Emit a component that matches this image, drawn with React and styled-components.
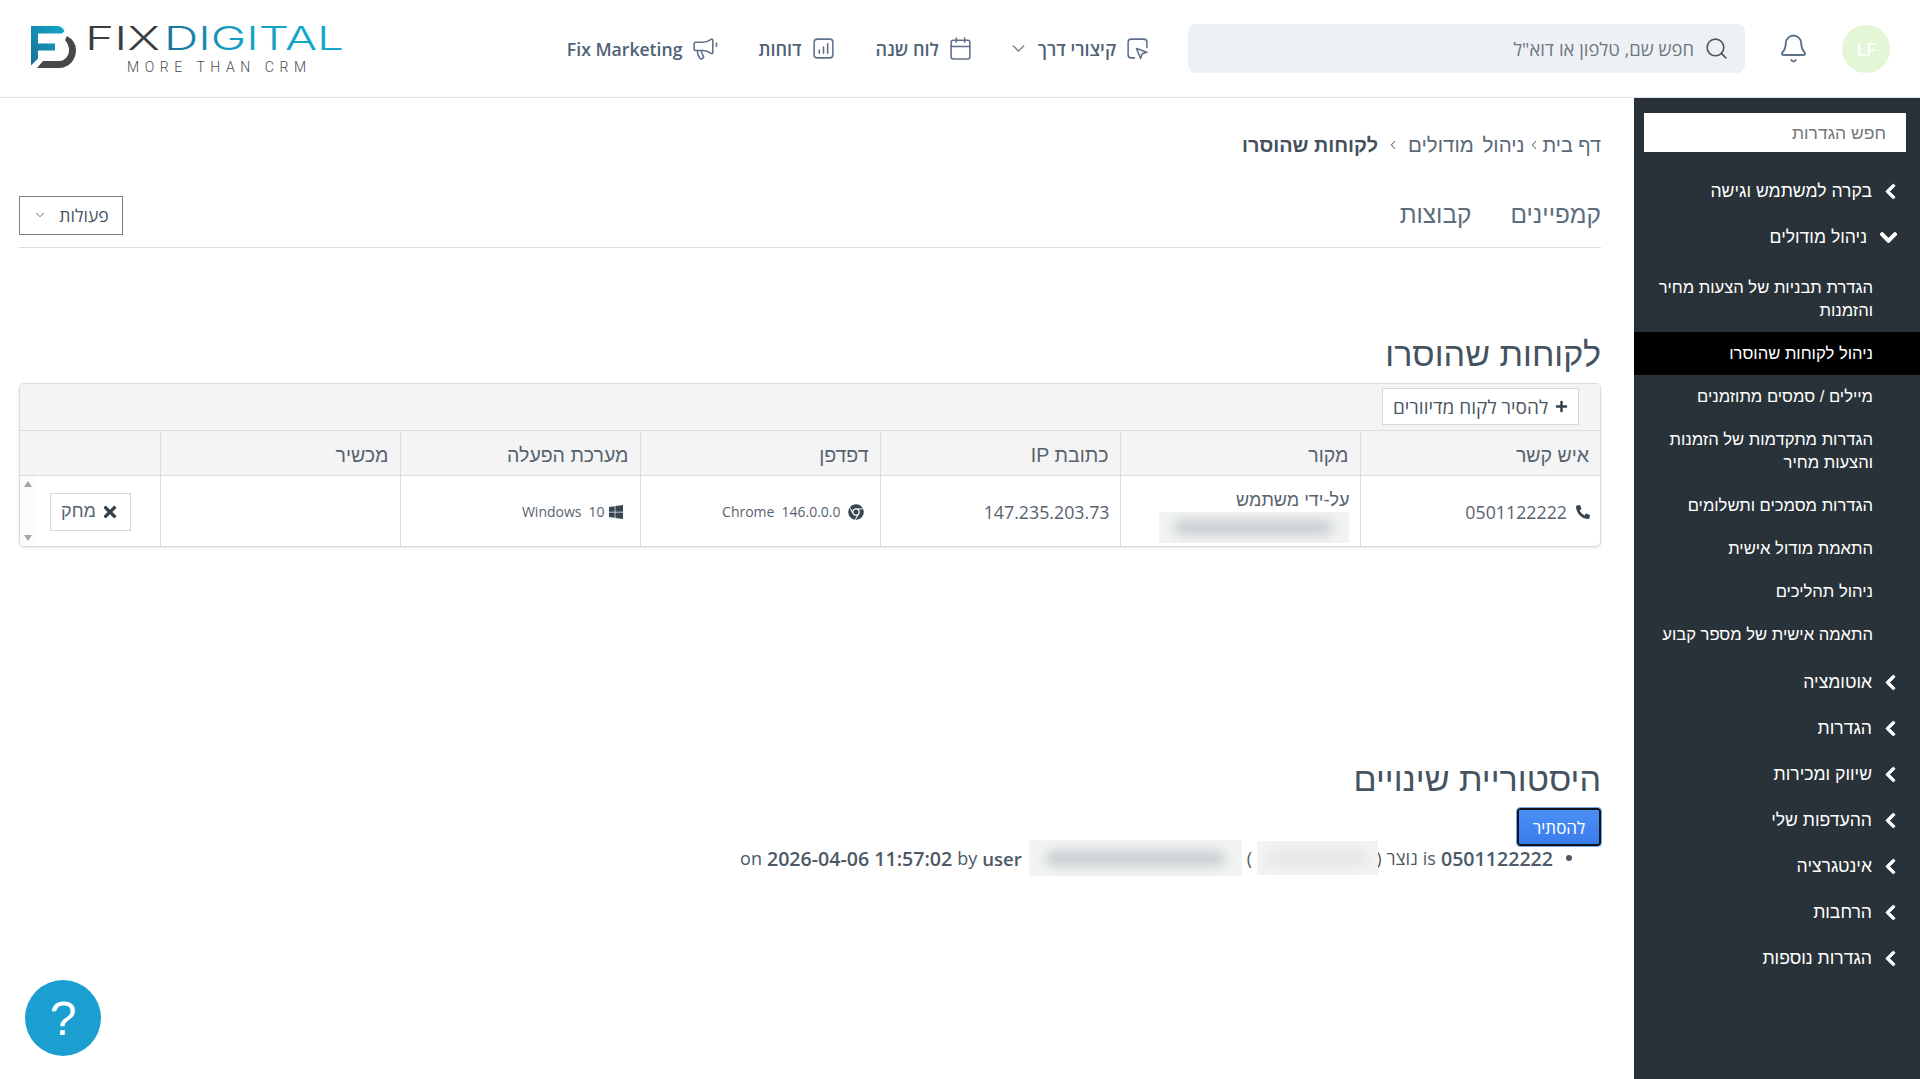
import React from "react";
import styled, { createGlobalStyle } from "styled-components";
import { Bell, Search, Calendar, ChevronDown, ChevronLeft } from "lucide-react";
import {
  FaChevronLeft,
  FaChevronDown,
  FaPhoneAlt,
  FaWindows,
  FaChrome,
  FaPlus,
  FaTimes,
} from "react-icons/fa";

const subItems = [
  { label: "הגדרת תבניות של הצעות מחיר והזמנות" },
  { label: "ניהול לקוחות שהוסרו", active: true },
  { label: "מיילים / סמסים מתוזמנים" },
  { label: "הגדרות מתקדמות של הזמנות והצעות מחיר" },
  { label: "הגדרות מסמכים ותשלומים" },
  { label: "התאמת מודול אישית" },
  { label: "ניהול תהליכים" },
  { label: "התאמה אישית של מספר קבוע" },
];

const bottomGroups = [
  "אוטומציה",
  "הגדרות",
  "שיווק ומכירות",
  "ההעדפות שלי",
  "אינטגרציה",
  "הרחבות",
  "הגדרות נוספות",
];

const Logo = () => (
  <LogoBox dir="ltr">
    <svg width="320" height="60" viewBox="0 0 320 60">
      <defs>
        <linearGradient id="fBlue" x1="0" y1="1" x2="1" y2="0">
          <stop offset="0" stopColor="#1a6f96" />
          <stop offset="1" stopColor="#12a8cc" />
        </linearGradient>
        <linearGradient id="wordBlue" x1="0" y1="0" x2="1" y2="0">
          <stop offset="0" stopColor="#1a7097" />
          <stop offset="0.4" stopColor="#12a0c4" />
          <stop offset="1" stopColor="#14a9cb" />
        </linearGradient>
      </defs>
      <g transform="translate(0 5)">
        <path
          d="M1 2H27Q32 2 34.5 7L32 9.5H8V19.5H25V26.5H8V34.5L1 41.5Z"
          fill="url(#fBlue)"
        />
        <path
          d="M37 12Q46 17 46 26C46 36 39 44 29 44H7L13 37H29C35 37 39 32 39 26Q39 21 35 16Z"
          fill="#46484a"
        />
      </g>
      <text x="55" y="31" fontFamily="Inter" fontWeight="300" fontSize="33" fill="#3b3d40" textLength="75" lengthAdjust="spacingAndGlyphs">
        FIX
      </text>
      <text x="134" y="31" fontFamily="Inter" fontWeight="300" fontSize="33" fill="url(#wordBlue)" textLength="180" lengthAdjust="spacingAndGlyphs">
        DIGITAL
      </text>
      <text x="97" y="53" fontFamily="Roboto" fontWeight="300" fontSize="14" fill="#4a4c4f" textLength="179" lengthAdjust="spacing">
        MORE THAN CRM
      </text>
    </svg>
  </LogoBox>
);

const ReportIcon = () => (
  <svg width="25" height="25" viewBox="0 0 24 24" fill="none" stroke="currentColor" strokeWidth="1.5" strokeLinecap="round">
    <rect x="3" y="3" width="18" height="18" rx="3" />
    <path d="M8 16.5v-3M12 16.5v-6M16 16.5v-9" />
  </svg>
);

const ShortcutIcon = () => (
  <svg width="25" height="25" viewBox="0 0 24 24" fill="none" stroke="currentColor" strokeWidth="1.5" strokeLinecap="round" strokeLinejoin="round">
    <path d="M9 21H6a3 3 0 0 1-3-3V6a3 3 0 0 1 3-3h12a3 3 0 0 1 3 3v5" />
    <path d="M11 12l10 3.5-4.5 1.5-1.5 4.5z" />
  </svg>
);

const MegaphoneIcon = () => (
  <svg width="27" height="25" viewBox="0 0 26 24" fill="none" stroke="currentColor" strokeWidth="1.5" strokeLinecap="round" strokeLinejoin="round">
    <path d="M11 6a13 13 0 0 0 8.4-2.8A1 1 0 0 1 21 4v12a1 1 0 0 1-1.6.8A13 13 0 0 0 11 14H5a2 2 0 0 1-2-2V8a2 2 0 0 1 2-2z" />
    <path d="M6 14a12 12 0 0 0 2.4 7.2 2 2 0 0 0 3.2-2.4A8 8 0 0 1 10 14" />
    <path d="M24.5 7v3" />
  </svg>
);

const App = () => (
  <Page dir="rtl">
    <GlobalStyle />
    <Header>
      <Avatar>LF</Avatar>
      <BellButton>
        <Bell size={31} strokeWidth={1.5} />
      </BellButton>
      <SearchBox>
        <Search size={25} strokeWidth={1.5} />
        <span>חפש שם, טלפון או דוא"ל</span>
      </SearchBox>
      <Nav>
        <NavItem>
          <ShortcutIcon />
          קיצורי דרך
          <NavCaret>
            <ChevronDown size={21} strokeWidth={1.5} />
          </NavCaret>
        </NavItem>
        <NavItem>
          <Calendar size={25} strokeWidth={1.5} />
          לוח שנה
        </NavItem>
        <NavItem>
          <ReportIcon />
          דוחות
        </NavItem>
        <NavItem>
          <MegaphoneIcon />
          <LatinLabel dir="ltr">Fix Marketing</LatinLabel>
        </NavItem>
      </Nav>
      <Logo />
    </Header>

    <Body>
      <Sidebar>
        <SideSearch>חפש הגדרות</SideSearch>
        <Group>
          <FaChevronLeft />
          בקרה למשתמש וגישה
        </Group>
        <Group $open>
          <FaChevronDown />
          ניהול מודולים
        </Group>
        <SubList>
          {subItems.map((item) => (
            <SubItem key={item.label} $active={item.active}>
              {item.label}
            </SubItem>
          ))}
        </SubList>
        <BottomGroups>
          {bottomGroups.map((label) => (
            <Group key={label}>
              <FaChevronLeft />
              {label}
            </Group>
          ))}
        </BottomGroups>
      </Sidebar>

      <Main>
        <Breadcrumb>
          <span>דף בית</span>
          <ChevronLeft size={14} strokeWidth={1.75} />
          <CrumbWide>ניהול מודולים</CrumbWide>
          <Spaced>
            <ChevronLeft size={14} strokeWidth={1.75} />
          </Spaced>
          <strong>לקוחות שהוסרו</strong>
        </Breadcrumb>

        <TabsRow>
          <Tabs>
            <Tab>קמפיינים</Tab>
            <Tab>קבוצות</Tab>
          </Tabs>
          <ActionsButton>
            פעולות
            <ChevronDown size={14} strokeWidth={1.5} />
          </ActionsButton>
        </TabsRow>

        <Heading>לקוחות שהוסרו</Heading>
        <TableCard>
          <Toolbar>
            <AddButton>
              <FaPlus />
              להסיר לקוח מדיוורים
            </AddButton>
          </Toolbar>
          <Table>
            <colgroup>
              <col width="240" />
              <col width="240" />
              <col width="240" />
              <col width="240" />
              <col width="240" />
              <col width="240" />
              <col />
            </colgroup>
            <thead>
              <tr>
                <th>איש קשר</th>
                <th>מקור</th>
                <th>כתובת IP</th>
                <th>דפדפן</th>
                <th>מערכת הפעלה</th>
                <th>מכשיר</th>
                <th />
              </tr>
            </thead>
            <tbody>
              <tr>
                <td>
                  <CellRow>
                    <PhoneIcon />
                    <span>0501122222</span>
                  </CellRow>
                </td>
                <SourceCell>
                  <SourceLabel>על-ידי משתמש</SourceLabel>
                  <BlurBox $w={190} $h={31}>
                    <BlurBar />
                  </BlurBox>
                </SourceCell>
                <td>147.235.203.73</td>
                <td>
                  <SmallRow $iconGap={7}>
                    <FaChrome />
                    <span>146.0.0.0</span>
                    <span>Chrome</span>
                  </SmallRow>
                </td>
                <td>
                  <SmallRow $iconGap={3}>
                    <FaWindows />
                    <span>10</span>
                    <span>Windows</span>
                  </SmallRow>
                </td>
                <td />
                <LastCell>
                  <DeleteButton>
                    <FaTimes />
                    מחק
                  </DeleteButton>
                  <Scroller>
                    <ArrowUp />
                    <ArrowDown />
                  </Scroller>
                </LastCell>
              </tr>
            </tbody>
          </Table>
        </TableCard>

        <HistoryHeading>היסטוריית שינויים</HistoryHeading>
        <HideButton>להסתיר</HideButton>
        <HistoryLine>
          <Bullet />
          <b>0501122222</b>
          <span>is</span>
          <span>נוצר</span>
          <span>(</span>
          <NameBlur $w={121} $h={34}>
            <BlurBar $light />
          </NameBlur>
          <span>)</span>
          <BlurBox $w={213} $h={36}>
            <BlurBar />
          </BlurBox>
          <UserLabel>user</UserLabel>
          <span>by</span>
          <b dir="ltr">2026-04-06 11:57:02</b>
          <span>on</span>
        </HistoryLine>
      </Main>
    </Body>

    <HelpBubble>?</HelpBubble>
  </Page>
);

export default App;

const GlobalStyle = createGlobalStyle`
  html, body {
    margin: 0;
    padding: 0;
    height: 100%;
    overflow: hidden;
    background: #fff;
  }
  * {
    box-sizing: border-box;
  }
`;

const Page = styled.div`
  height: 1079px;
  display: flex;
  flex-direction: column;
  font-family: "Open Sans", "Noto Sans", "Liberation Sans", sans-serif;
  color: #4a5764;
  background: #fff;
`;

const Header = styled.header`
  height: 98px;
  flex: none;
  display: flex;
  align-items: center;
  padding: 0 30px 0 0;
  border-bottom: 1px solid #dde2e8;
  background: #fff;
`;

const Avatar = styled.div`
  width: 48px;
  height: 48px;
  flex: none;
  border-radius: 50%;
  background: #e3f6d5;
  color: #fff;
  font-size: 18px;
  font-weight: 600;
  display: flex;
  align-items: center;
  justify-content: center;
`;

const BellButton = styled.div`
  margin-right: 33px;
  display: flex;
  color: #5d7289;
`;

const SearchBox = styled.div`
  width: 557px;
  height: 49px;
  flex: none;
  margin-right: 33px;
  padding: 0 16px;
  border-radius: 8px;
  background: #edf1f5;
  display: flex;
  align-items: center;
  gap: 10px;
  font-size: 18.4px;
  color: #6f7780;

  svg {
    color: #4f5660;
  }
`;

const Nav = styled.nav`
  display: flex;
  align-items: center;
  gap: 40px;
  margin-right: 38px;
`;

const NavItem = styled.div`
  display: flex;
  align-items: center;
  gap: 9px;
  font-size: 18px;
  font-weight: 600;
  color: #4f6277;
  white-space: nowrap;

  svg {
    color: #5d7289;
    flex: none;
  }
`;

const NavCaret = styled.span`
  display: flex;
  margin-left: -5px;
`;

const LatinLabel = styled.span`
  font-size: 17.6px;
`;

const LogoBox = styled.div`
  margin-right: auto;
  margin-left: 30px;
  height: 60px;
  display: flex;
`;

const Body = styled.div`
  flex: 1;
  display: flex;
  min-height: 0;
`;

const Sidebar = styled.aside`
  width: 286px;
  flex: none;
  padding-top: 15px;
  background: #293239;
  color: #fff;
`;

const SideSearch = styled.div`
  height: 39px;
  margin: 0 14px 17px 10px;
  padding: 2px 20px 0;
  display: flex;
  align-items: center;
  background: #fff;
  font-size: 17.5px;
  font-family: "Liberation Sans", sans-serif;
  color: #777;
`;

const Group = styled.div`
  height: 45.9px;
  display: flex;
  align-items: center;
  gap: ${(p) => (p.$open ? "12px" : "10px")};
  padding-right: ${(p) => (p.$open ? "22px" : "21px")};
  font-size: 17.6px;
  font-family: "Liberation Sans", sans-serif;

  svg {
    flex: none;
    font-size: ${(p) => (p.$open ? "19px" : "17px")};
    stroke: currentColor;
    stroke-width: 30px;
  }
`;

const SubList = styled.div`
  margin-top: 5px;
`;

const SubItem = styled.div`
  padding: 10px 47px 10px 20px;
  line-height: 23px;
  font-size: 16.6px;
  font-family: "Liberation Sans", sans-serif;
  background: ${(p) => (p.$active ? "#000" : "transparent")};
`;

const BottomGroups = styled.div`
  margin-top: 4px;
`;

const Main = styled.main`
  flex: 1;
  min-width: 0;
  padding: 35px 33px 0 19px;
`;

const Breadcrumb = styled.div`
  height: 24px;
  display: flex;
  align-items: center;
  gap: 2px;
  font-size: 19.8px;
  font-family: "Liberation Sans", sans-serif;
  color: #5a6977;

  strong {
    color: #43505c;
  }
`;

const CrumbWide = styled.span`
  font-size: 20.5px;
  word-spacing: 3px;
`;

const Spaced = styled.span`
  display: flex;
  margin: 0 6px;
`;

const TabsRow = styled.div`
  height: 52px;
  margin-top: 39px;
  display: flex;
  justify-content: space-between;
  align-items: flex-start;
  border-bottom: 1px solid #dcdcdc;
`;

const Tabs = styled.div`
  display: flex;
  gap: 39px;
`;

const Tab = styled.div`
  line-height: 38px;
  font-size: 24.4px;
  font-family: "Liberation Sans", sans-serif;
  color: #5d6d7c;
`;

const ActionsButton = styled.div`
  width: 104px;
  height: 39px;
  padding-bottom: 2px;
  display: flex;
  align-items: center;
  justify-content: center;
  gap: 12px;
  border: 1px solid #777f85;
  font-size: 17.6px;
  color: #4a5764;
`;

const Heading = styled.h2`
  margin: 86px 0 9px;
  height: 40px;
  line-height: 40px;
  font-size: 34.1px;
  font-weight: 400;
  font-family: "Liberation Sans", sans-serif;
  color: #45535f;
`;

const HistoryHeading = styled(Heading)`
  margin-top: 212px;
`;

const TableCard = styled.div`
  border: 1px solid #dcdcdc;
  border-radius: 5px;
  box-shadow: 0 1px 3px rgba(0, 0, 0, 0.1);
  overflow: hidden;
`;

const Toolbar = styled.div`
  height: 47px;
  padding: 4px 21px 0 0;
  background: #f4f4f4;
  border-bottom: 1px solid #dcdcdc;
`;

const AddButton = styled.div`
  width: 197px;
  height: 37px;
  display: inline-flex;
  align-items: center;
  justify-content: center;
  gap: 7px;
  background: #fff;
  border: 1px solid #d8d8d8;
  font-size: 19px;
  color: #4a5764;
  white-space: nowrap;

  svg {
    font-size: 13px;
    color: #33404c;
  }
`;

const Table = styled.table`
  width: 100%;
  table-layout: fixed;
  border-collapse: collapse;
  font-size: 17.8px;

  th {
    height: 44px;
    padding: 5px 11px 0;
    background: #f4f4f4;
    border-bottom: 1px solid #dcdcdc;
    border-left: 1px solid #dcdcdc;
    font-weight: 400;
    text-align: right;
    font-size: 19.5px;
    font-family: "Liberation Sans", sans-serif;
    color: #56636f;
  }

  td {
    height: 71px;
    padding: 2px 10px 0;
    border-left: 1px solid #dcdcdc;
    text-align: right;
    color: #56636f;
  }

  th:last-child,
  td:last-child {
    border-left: none;
  }
`;

const CellRow = styled.div`
  display: flex;
  align-items: center;
  gap: 9px;
`;

const PhoneIcon = styled(FaPhoneAlt)`
  font-size: 14px;
  color: #39454f;
`;

const SmallRow = styled.div`
  display: flex;
  align-items: center;
  gap: 7px;
  padding-right: 6px;
  font-size: 14px;

  svg {
    font-size: 16px;
    color: #39454f;
    margin-left: ${(p) => p.$iconGap - 7}px;
  }
`;

const SourceCell = styled.td`
  && {
    padding: 12px 11px 0 0;
    vertical-align: top;
  }
`;

const SourceLabel = styled.div`
  height: 24px;
  font-size: 18px;
  line-height: 24px;
  margin-right: -1px;
  font-family: "Liberation Sans", sans-serif;
`;

const BlurBox = styled.div`
  flex: none;
  width: ${(p) => p.$w}px;
  height: ${(p) => p.$h}px;
  overflow: hidden;
  background: #f2f4f4;
  display: flex;
  align-items: center;
  justify-content: center;
`;

const NameBlur = styled(BlurBox)`
  margin-right: -7px;
`;

const BlurBar = styled.div`
  width: 84%;
  height: 15px;
  border-radius: 6px;
  background: ${(p) => (p.$light ? "#e4e5e7" : "#c9cccf")};
  filter: blur(6px);
`;

const LastCell = styled.td`
  position: relative;
`;

const DeleteButton = styled.div`
  width: 81px;
  height: 38px;
  margin-right: 19px;
  display: inline-flex;
  align-items: center;
  justify-content: center;
  gap: 5px;
  border: 1px solid #d8d8d8;
  font-size: 18px;
  font-family: "Liberation Sans", sans-serif;
  color: #56636f;

  svg {
    font-size: 18px;
    color: #33404c;
  }
`;

const Scroller = styled.div`
  position: absolute;
  left: 0;
  top: 0;
  bottom: 0;
  width: 16px;
  padding: 5px 0;
  display: flex;
  flex-direction: column;
  justify-content: space-between;
  align-items: center;
  background: #fbfbfb;
`;

const ArrowUp = styled.i`
  width: 0;
  height: 0;
  border: 4px solid transparent;
  border-top: none;
  border-bottom: 6px solid #a6a6a6;
`;

const ArrowDown = styled.i`
  width: 0;
  height: 0;
  border: 4px solid transparent;
  border-bottom: none;
  border-top: 6px solid #a6a6a6;
`;

const HideButton = styled.div`
  width: 84px;
  height: 38px;
  display: flex;
  align-items: center;
  justify-content: center;
  background: linear-gradient(#4a8ff5, #3a7bea);
  border: 2px solid #10151c;
  outline: 1px solid #7aa5ea;
  font-size: 17px;
  color: #fff;
  border-radius: 3px;
`;

const HistoryLine = styled.div`
  height: 24px;
  display: flex;
  align-items: center;
  gap: 5px;
  padding-right: 29px;
  font-size: 19.6px;
  color: #4d5a66;

  b {
    font-weight: 600;
  }

  span {
    font-size: 18px;
  }
`;

const UserLabel = styled.b`
  margin-right: 2px;
  font-size: 18.6px;
`;

const Bullet = styled.i`
  width: 6px;
  height: 6px;
  margin-left: 8px;
  border-radius: 50%;
  background: #4d5a66;
`;

const HelpBubble = styled.div`
  position: absolute;
  left: 25px;
  top: 980px;
  width: 76px;
  height: 76px;
  border-radius: 50%;
  background: #1b9fd1;
  color: #fff;
  font-family: "Liberation Sans", sans-serif;
  font-size: 48px;
  display: flex;
  align-items: center;
  justify-content: center;
`;
